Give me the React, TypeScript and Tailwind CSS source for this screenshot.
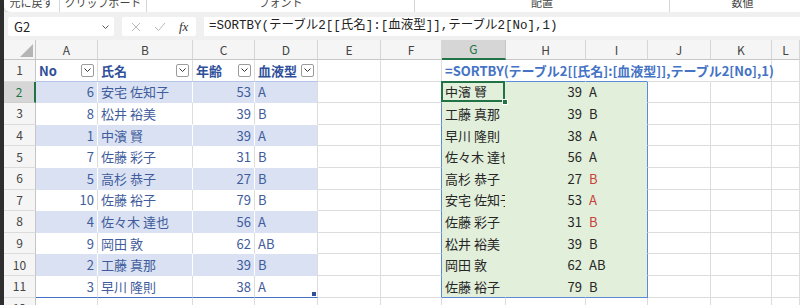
import type { ReactNode } from "react";

const GRID =
  "grid grid-cols-[32px_62px_95px_62px_63px_63px_61px_64px_80px_62px_63px_61px_1fr]";

const letters = ["A", "B", "C", "D", "E", "F", "G", "H", "I", "J", "K", "L"];

const table: [number, string, number, string][] = [
  [6, "安宅 佐知子", 53, "A"],
  [8, "松井 裕美", 39, "B"],
  [1, "中濱 賢", 39, "A"],
  [7, "佐藤 彩子", 31, "B"],
  [5, "高杉 恭子", 27, "B"],
  [10, "佐藤 裕子", 79, "B"],
  [4, "佐々木 達也", 56, "A"],
  [9, "岡田 敦", 62, "AB"],
  [2, "工藤 真那", 39, "B"],
  [3, "早川 隆則", 38, "A"],
];

const spill: [string, number, string, boolean][] = [
  ["中濱 賢", 39, "A", false],
  ["工藤 真那", 39, "B", false],
  ["早川 隆則", 38, "A", false],
  ["佐々木 達也", 56, "A", false],
  ["高杉 恭子", 27, "B", true],
  ["安宅 佐知子", 53, "A", true],
  ["佐藤 彩子", 31, "B", true],
  ["松井 裕美", 39, "B", false],
  ["岡田 敦", 62, "AB", false],
  ["佐藤 裕子", 79, "B", false],
];

const FORMULA = "=SORTBY(テーブル2[[氏名]:[血液型]],テーブル2[No],1)";

// cell border colours, always side by side so nothing fights the shorthand
const GR = "border-r-[#dcdcdc]";
const GB = "border-b-[#dcdcdc]";
const WR = "border-r-white";
const WB = "border-b-white";
const BANDB = "border-b-[#d9e1f2]";
const BLUER = "border-r-[#5b8bd6]";
const BLUEB = "border-b-[#5b8bd6]";
const GREENR = "border-r-[#e2efda]";
const GREENB = "border-b-[#e2efda]";

function Cell({
  className = "",
  right = false,
  children,
}: {
  className?: string;
  right?: boolean;
  children?: ReactNode;
}) {
  return (
    <div
      className={`flex min-w-0 items-center overflow-hidden whitespace-nowrap border-b border-r px-[3px] leading-none ${
        right ? "justify-end" : ""
      } ${className}`}
    >
      {children}
    </div>
  );
}

function RowHead({ n, sel = false }: { n: number; sel?: boolean }) {
  return sel ? (
    <div className="flex items-center justify-center border-b border-r-2 border-b-[#cfcfcf] border-r-[#217346] bg-[#d6d6d6] text-[12px] text-[#217346]">
      {n}
    </div>
  ) : (
    <div className="flex items-center justify-center border-b border-r border-b-[#dcdcdc] border-r-[#c6c6c6] bg-[#f5f5f5] text-[12px] text-[#444]">
      {n}
    </div>
  );
}

function Filter() {
  return (
    <span className="ml-auto flex h-[13px] w-[13px] shrink-0 items-center justify-center rounded-[2px] border border-[#9c9c9c] bg-white">
      <svg width="7" height="4" viewBox="0 0 7 4">
        <path d="M0.5 0.5 L3.5 3.5 L6.5 0.5" fill="none" stroke="#333" strokeWidth="1" />
      </svg>
    </span>
  );
}

function Ribbon() {
  const groups = [
    { w: "w-[56px]", t: "元に戻す" },
    { w: "w-[87px]", t: "クリップボード" },
    { w: "w-[268px]", t: "フォント" },
    { w: "w-[255px]", t: "配置" },
    { w: "w-[145px]", t: "数値" },
  ];
  return (
    <div className="flex h-[12px] shrink-0 overflow-hidden rounded-bl-[6px] bg-white shadow-[0_1px_2px_rgba(0,0,0,0.18)]">
      {groups.map((g, i) => (
        <div
          key={g.t}
          className={`flex shrink-0 justify-center ${g.w} ${i < 4 ? "border-r border-r-[#d6d6d6]" : ""}`}
        >
          <span className="mt-[-5px] text-[11px] leading-[14px] text-[#444]">{g.t}</span>
        </div>
      ))}
    </div>
  );
}

function FormulaBar() {
  return (
    <div className="flex h-[28px] shrink-0 items-start gap-[8px] bg-[#f0f0f0] pl-[4px] pt-[5px]">
      <div className="flex h-[19px] w-[106px] items-center justify-between rounded-[2px] bg-white pl-[6px] pr-[5px] text-[13px] text-[#222]">
        <span>G2</span>
        <svg width="7" height="4" viewBox="0 0 7 4">
          <path d="M0.5 0.5 L3.5 3.5 L6.5 0.5" fill="none" stroke="#555" strokeWidth="1" />
        </svg>
      </div>
      <div className="flex h-[19px] w-[74px] items-center gap-[13px] rounded-[2px] bg-white pl-[9px]">
        <svg width="10" height="10" viewBox="0 0 10 10">
          <path d="M1 1 L9 9 M9 1 L1 9" stroke="#b8b8b8" strokeWidth="1" />
        </svg>
        <svg width="12" height="10" viewBox="0 0 12 10">
          <path d="M1 5 L4.5 8.5 L11 1" fill="none" stroke="#b8b8b8" strokeWidth="1" />
        </svg>
        <span className="font-['Liberation_Serif',serif] text-[13px] italic text-[#333]">fx</span>
      </div>
      <div className="flex h-[19px] flex-1 items-center bg-white pl-[5px] font-['Liberation_Mono','Noto_Sans_CJK_JP',monospace] text-[12.5px] text-[#222]">
        {FORMULA}
      </div>
    </div>
  );
}

function ColumnHeads() {
  return (
    <div className={`${GRID} h-[20px]`}>
      <div className="flex items-end justify-end border-b border-r border-b-[#c6c6c6] border-r-[#c6c6c6] bg-[#f5f5f5] pb-[2px] pr-[2px]">
        <svg width="13" height="13" viewBox="0 0 13 13">
          <polygon points="13,0 13,13 0,13" fill="#b5b5b5" />
        </svg>
      </div>
      {letters.map((l) =>
        l === "G" ? (
          <div
            key={l}
            className="flex items-center justify-center border-b-2 border-r border-b-[#217346] border-r-[#c6c6c6] bg-[#d6d6d6] text-[12px] text-[#217346]"
          >
            {l}
          </div>
        ) : (
          <div
            key={l}
            className="flex items-center justify-center border-b border-r border-b-[#c6c6c6] border-r-[#d6d6d6] bg-[#f5f5f5] text-[12px] text-[#444]"
          >
            {l}
          </div>
        )
      )}
    </div>
  );
}

const ROW = "h-[21.6px]";

function HeaderRow() {
  const heads = ["No", "氏名", "年齢", "血液型"];
  return (
    <div className={`${GRID} ${ROW}`}>
      <RowHead n={1} />
      {heads.map((h) => (
        <Cell key={h} className={`${GR} border-b-[#b4c6e7] font-bold text-[#2f4f9a]`}>
          <span>{h}</span>
          <Filter />
        </Cell>
      ))}
      <Cell className={`${GR} ${GB}`} />
      <Cell className={`${GR} ${GB}`} />
      <Cell className={`${WR} ${BLUEB} overflow-visible`}>
        <span className="relative z-10 text-[13px] font-bold text-[#4472c4]">{FORMULA}</span>
      </Cell>
      <Cell className={`${WR} ${BLUEB}`} />
      <Cell className={`${WR} ${BLUEB}`} />
      <Cell className={`${WR} ${GB}`} />
      <Cell className={`${GR} ${GB}`} />
      <Cell className={`${GR} ${GB}`} />
    </div>
  );
}

function DataRow({ i }: { i: number }) {
  const [no, name, age, blood] = table[i];
  const [sName, sAge, sBlood, red] = spill[i];
  const band = i % 2 === 0;
  const last = i === table.length - 1;
  const tb = last ? "border-b-[#4472c4]" : band ? BANDB : WB;
  const tr = band ? WR : GR;
  const tbg = band ? "bg-[#d9e1f2]" : "";
  const sb = last ? BLUEB : GREENB;
  return (
    <div className={`${GRID} ${ROW}`}>
      <RowHead n={i + 2} sel={i === 0} />
      <Cell right className={`${tr} ${tb} ${tbg} text-[#3f5c9c]`}>
        {no}
      </Cell>
      <Cell className={`${tr} ${tb} ${tbg} text-[#3f5c9c]`}>{name}</Cell>
      <Cell right className={`${tr} ${tb} ${tbg} text-[#3f5c9c]`}>
        {age}
      </Cell>
      <div
        className={`relative flex items-center border-b border-r px-[3px] leading-none ${GR} ${tb} ${tbg} text-[#3f5c9c]`}
      >
        {blood}
        {last && <span className="absolute bottom-[1px] right-[1px] h-[4px] w-[4px] bg-[#2f4f9a]" />}
      </div>
      <Cell className={`${GR} ${GB}`} />
      <Cell className={`${BLUER} ${GB}`} />
      {i === 0 ? (
        <div className={`relative flex items-center border-b border-r px-[3px] leading-none ${GREENR} ${sb} bg-[#e2efda] text-[#262626]`}>
          <span className="overflow-hidden whitespace-nowrap">{sName}</span>
          <span className="pointer-events-none absolute bottom-0 left-[-1px] right-0 top-[-1px] border-2 border-[#217346]" />
          <span className="absolute bottom-[-3px] right-[-3px] h-[6px] w-[6px] border border-white bg-[#217346]" />
        </div>
      ) : (
        <Cell className={`${GREENR} ${sb} bg-[#e2efda] text-[#262626]`}>{sName}</Cell>
      )}
      <Cell right className={`${GREENR} ${sb} bg-[#e2efda] text-[#262626]`}>
        {sAge}
      </Cell>
      <Cell className={`${BLUER} ${sb} bg-[#e2efda] ${red ? "text-[#c8413a]" : "text-[#262626]"}`}>
        {sBlood}
      </Cell>
      <Cell className={`${GR} ${GB}`} />
      <Cell className={`${GR} ${GB}`} />
      <Cell className={`${GR} ${GB}`} />
    </div>
  );
}

export default function App() {
  return (
    <div className="flex h-[305px] w-[800px] overflow-hidden bg-[#2e2e2e] font-['Noto_Sans_CJK_JP','Noto_Sans',sans-serif]">
      <div className="w-[4px] shrink-0" />
      <div className="flex min-w-0 flex-1 flex-col bg-[#f0f0f0]">
        <Ribbon />
        <FormulaBar />
        <div className="flex-1 bg-white text-[13px]">
          <ColumnHeads />
          <HeaderRow />
          {table.map((_, i) => (
            <DataRow key={i} i={i} />
          ))}
          <div className={`${GRID} ${ROW}`}>
            <RowHead n={12} />
            {letters.map((l) => (
              <Cell key={l} className={`${GR} ${GB}`} />
            ))}
          </div>
        </div>
      </div>
    </div>
  );
}
